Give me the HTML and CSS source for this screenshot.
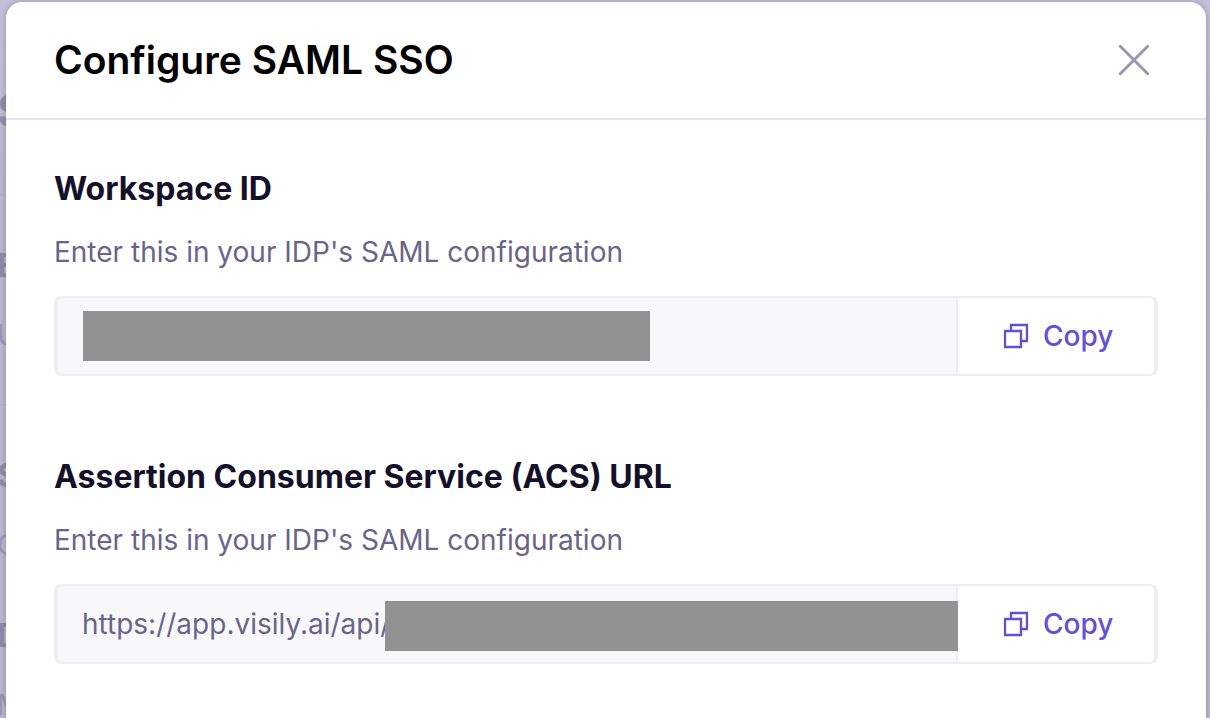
FILE: index.html
```html
<!DOCTYPE html>
<html lang="en">
<head>
<meta charset="utf-8">
<meta name="viewport" content="width=device-width, initial-scale=1">
<title>Configure SAML SSO</title>
<link rel="stylesheet" href="styles.css">
</head>
<body>
<div class="backdrop" aria-hidden="true">
  <div class="backdrop-top">S</div>
  <div class="backdrop-group"><b>E</b><span>U</span></div>
  <div class="backdrop-group"><b>S</b><span>C</span></div>
  <div class="backdrop-group"><b>D</b><span>M</span></div>
</div>
<main class="dialog" role="dialog" aria-labelledby="dialog-title">
  <header class="dialog-header">
    <h1 class="dialog-title" id="dialog-title">Configure SAML SSO</h1>
    <button class="close" type="button" aria-label="Close">
      <svg width="32" height="32" viewBox="0 0 32 32" fill="none" stroke="currentColor" stroke-width="3" stroke-linecap="round"><path d="M2.3 2.3 29.7 29.7M29.7 2.3 2.3 29.7"/></svg>
    </button>
  </header>
  <div class="dialog-body">
    <section class="group">
      <h2 class="group-title"><label for="workspace-id">Workspace ID</label></h2>
      <p class="hint">Enter this in your IDP's SAML configuration</p>
      <div class="field">
        <div class="value">
          <input class="input" id="workspace-id" type="text" readonly>
          <span class="mask mask-id"></span>
        </div>
        <button class="copy" type="button">
          <svg width="26" height="26" viewBox="0 0 26 26" fill="none" stroke="currentColor" stroke-width="2.3"><path d="M2 8H18V24H2ZM8 8V2H24V18H18"/></svg>
          Copy
        </button>
      </div>
    </section>
    <section class="group">
      <h2 class="group-title"><label for="acs-url">Assertion Consumer Service (ACS) URL</label></h2>
      <p class="hint">Enter this in your IDP's SAML configuration</p>
      <div class="field">
        <div class="value">
          <input class="input" id="acs-url" type="text" value="https://app.visily.ai/api/" readonly>
          <span class="mask mask-url"></span>
        </div>
        <button class="copy" type="button">
          <svg width="26" height="26" viewBox="0 0 26 26" fill="none" stroke="currentColor" stroke-width="2.3"><path d="M2 8H18V24H2ZM8 8V2H24V18H18"/></svg>
          Copy
        </button>
      </div>
    </section>
  </div>
</main>
</body>
</html>
```
FILE: styles.css
```css
* { box-sizing: border-box; }

body {
  margin: 0;
  height: 100vh;
  overflow: hidden;
  position: relative;
  padding: 2px 4px 0 6px;
  font-family: Inter, "Liberation Sans", sans-serif;
  background: linear-gradient(#c5c1d9, #bbb8ce 25%, #bab7cd);
}

h1, h2, p { margin: 0; }

/* Dimmed page behind the dialog */
.backdrop {
  position: absolute;
  inset: 0 0 0 -3px;
  color: #9a95b5;
}

.backdrop-top {
  padding: 86px 0 58px;
  font-size: 45px;
  line-height: 50px;
  font-weight: 700;
  color: #908ca8;
}

.backdrop-group {
  display: flex;
  flex-direction: column;
  gap: 29px;
  padding: 51px 0 49px;
  border-top: 1px solid #b1adc8;
  font-size: 28px;
  line-height: 40px;
}

.backdrop-group b {
  font-size: 32px;
  color: #8f8ba6;
}

.backdrop-group:last-child {
  border-top: 0;
  padding: 2px 0 0;
}

.dialog {
  position: relative;
  min-height: 100vh;
  background: #fff;
  border-radius: 16px 16px 0 0;
  box-shadow: 0 0 6px rgba(80, 70, 120, 0.4);
}

.dialog-header {
  display: flex;
  align-items: center;
  justify-content: space-between;
  padding: 32px 56px 32px 48px;
  border-bottom: 2px solid #e6e5ed;
}

.dialog-title {
  font-size: 39px;
  line-height: 52px;
  font-weight: 600;
  color: #000;
}

.close {
  display: flex;
  padding: 0;
  border: 0;
  background: none;
  color: #9b97b3;
}

.dialog-body {
  display: flex;
  flex-direction: column;
  gap: 80px;
  padding: 48px;
}

.group-title {
  margin-bottom: 22px;
  font-size: 32px;
  line-height: 42px;
  font-weight: 700;
  color: #141029;
}

.hint {
  margin-bottom: 24px;
  font-size: 28px;
  line-height: 40px;
  font-weight: 400;
  color: #69648a;
}

.field {
  display: flex;
  height: 80px;
  border: solid #ededf2;
  border-width: 2px 4px;
  border-radius: 8px;
  background: #f8f8fb;
}

.value {
  position: relative;
  flex: 1;
}

.input {
  width: 100%;
  height: 100%;
  padding: 0 24px;
  border: 0;
  outline: 0;
  background: none;
  font: 400 28px/40px Inter, "Liberation Sans", sans-serif;
  color: #69648a;
}

/* Grey block over the concealed part of a value */
.mask {
  position: absolute;
  height: 50px;
  background: #929292;
}

.mask-id {
  top: 13px;
  left: 25px;
  width: 567px;
}

.mask-url {
  top: 15px;
  left: 327px;
  right: -2px;
}

.copy {
  display: flex;
  align-items: center;
  gap: 14px;
  width: 198px;
  padding: 0 0 0 45px;
  border: 0;
  border-left: 2px solid #ededf2;
  border-radius: 0 4px 4px 0;
  background: #fff;
  font: 500 28px/40px Inter, "Liberation Sans", sans-serif;
  color: #6250d6;
}
```
